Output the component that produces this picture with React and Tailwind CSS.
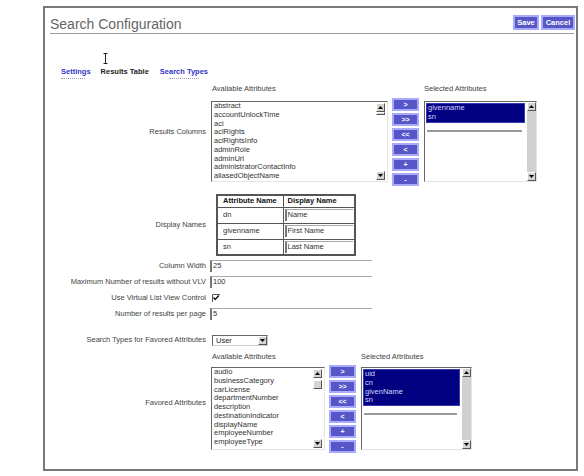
import React from 'react'

const resultsAvail = ['abstract', 'accountUnlockTime', 'aci', 'aclRights', 'aclRightsInfo', 'adminRole', 'adminUrl', 'administratorContactInfo', 'aliasedObjectName']
const favoredAvail = ['audio', 'businessCategory', 'carLicense', 'departmentNumber', 'description', 'destinationIndicator', 'displayName', 'employeeNumber', 'employeeType']
const moveButtons = ['>', '>>', '<<', '<', '+', '-']

function Arrow({ down }) {
  return (
    <div className="w-[9px] h-[9px] bg-[#d6d3ce] border border-t-white border-l-white border-b-[#555] border-r-[#555] flex items-center justify-center">
      <svg width="5" height="3" viewBox="0 0 5 3">
        <path d={down ? 'M0 0H5L2.5 3Z' : 'M0 3H5L2.5 0Z'} fill="#000" />
      </svg>
    </div>
  )
}

function AvailList({ items, w, h, thumb }) {
  return (
    <div className={`flex bg-white border border-t-[#666] border-l-[#666] border-r-[#e5e5e5] border-b-[#e5e5e5] ${w} ${h}`}>
      <div className="flex-1 pl-[2px] text-[7.5px] leading-[8.75px] text-[#333] overflow-hidden whitespace-nowrap">
        {items.map((t) => (
          <div key={t}>{t}</div>
        ))}
      </div>
      <div className="w-[11px] flex flex-col justify-between py-px pr-px">
        <div className="flex flex-col">
          <Arrow />
          <div className={`w-[9px] bg-[#d6d3ce] border border-t-white border-l-white border-b-[#555] border-r-[#555] ${thumb}`} />
        </div>
        <Arrow down />
      </div>
    </div>
  )
}

function SelectedList({ items, w, h }) {
  return (
    <div className={`flex bg-white border border-t-[#666] border-l-[#666] border-r-[#e5e5e5] border-b-[#e5e5e5] ${w} ${h}`}>
      <div className="flex-1 p-px">
        <div className="bg-[#000080] border border-[#3a3ab0] text-[#d4d4ff] text-[7.5px] leading-[8.75px] pl-px">
          {items.map((t) => (
            <div key={t}>{t}</div>
          ))}
        </div>
        <div className="mt-[7px] h-[2px] bg-[#9a9a9a] mx-px mr-[3px]" />
      </div>
      <div className="w-[10px] bg-[#d0d0d0] border-l border-white flex flex-col justify-between">
        <Arrow />
        <Arrow down />
      </div>
    </div>
  )
}

function MoveButtons() {
  return (
    <div className="flex flex-col gap-[2px]">
      {moveButtons.map((b) => (
        <div key={b} className="w-[27px] h-[13px] bg-[#5656c8] border-2 border-[#aaaafc] text-white text-[7px] font-bold leading-none flex items-center justify-center">
          {b}
        </div>
      ))}
    </div>
  )
}

function Field({ value, w }) {
  return (
    <div className={`h-[12px] bg-white border-t border-l-2 border-t-[#aaa] border-l-[#777] text-[7.5px] leading-[10px] pl-px text-[#333] ${w}`}>
      {value}
    </div>
  )
}

function Label({ children, cls = '' }) {
  return <div className={`w-[161px] text-right text-[7.5px] leading-[10px] text-[#444] whitespace-nowrap ${cls}`}>{children}</div>
}

export default function App() {
  return (
    <div className="relative w-[584px] h-[476px] bg-white font-['Liberation_Sans',Arial,sans-serif] overflow-hidden">
      {/* mouse text cursor */}
      <svg className="absolute left-[103px] top-[53px]" width="5" height="11" viewBox="0 0 5 11">
        <path d="M0.5 0.5H4.5M2.5 0.5V10.5M0.5 10.5H4.5" stroke="#222" strokeWidth="1" fill="none" />
      </svg>

      <div className="ml-[43px] mt-[6px] w-[535px] h-[465px] border-2 border-[#787878]">
        {/* header */}
        <div className="h-[25px] flex justify-between items-end pl-[5px] pr-[1px]">
          <div className="text-[14px] leading-[16px] text-[#666] mb-px">Search Configuration</div>
          <div className="flex gap-[2px] mb-[3px]">
            <div className="w-[26px] h-[15px] bg-[#5656c8] border-2 border-[#aaaafc] text-white text-[7.5px] font-bold flex items-center justify-center leading-none">Save</div>
            <div className="w-[34px] h-[15px] bg-[#5656c8] border-2 border-[#aaaafc] text-white text-[7.5px] font-bold flex items-center justify-center leading-none">Cancel</div>
          </div>
        </div>
        <div className="h-px bg-[#9a9a9a] ml-[5px] mr-[2px]" />

        {/* tabs */}
        <div className="mt-[33px] h-[10px] flex gap-[10px] pl-[16px] text-[7.5px] leading-[10px] font-bold">
          <span className="relative text-[#3232c8]">
            Settings
            <span className="absolute left-0 top-[11px] w-[24px] border-t border-dotted border-[#9a9aaa]" />
          </span>
          <span className="text-[#222]">Results Table</span>
          <span className="relative text-[#3232c8] ml-px">
            Search Types
            <span className="absolute left-[9px] top-[11px] w-[30px] border-t border-dotted border-[#9a9aaa]" />
          </span>
        </div>

        {/* results columns */}
        <div className="mt-[7px] flex gap-[4px] items-start">
          <Label cls="mt-[43px]">Results Columns</Label>
          <div className="flex items-start">
            <div className="ml-px">
              <div className="h-[10px] text-[7.5px] leading-[10px] text-[#444] pl-px">Available Attributes</div>
              <div className="mt-[7px]">
                <AvailList items={resultsAvail} w="w-[177px]" h="h-[81px]" thumb="h-[3px]" />
              </div>
            </div>
            <div className="ml-[4px] pt-[14px]">
              <MoveButtons />
            </div>
            <div className="ml-[5px]">
              <div className="h-[10px] text-[7.5px] leading-[10px] text-[#444]">Selected Attributes</div>
              <div className="mt-[7px]">
                <SelectedList items={['givenname', 'sn']} w="w-[113px]" h="h-[81px]" />
              </div>
            </div>
          </div>
        </div>

        {/* display names */}
        <div className="mt-[8px] flex gap-[4px] items-center">
          <Label>Display Names</Label>
          <table className="ml-[6px] border-collapse border-2 border-[#555] text-[7.5px] text-[#333]">
            <thead>
              <tr className="h-[12px]">
                <th className="w-[66px] border border-[#555] text-left font-bold pl-[5px] leading-[10px] text-[#111]">Attribute Name</th>
                <th className="w-[72px] border border-[#555] text-left font-bold pl-[4px] leading-[10px] text-[#111]">Display Name</th>
              </tr>
            </thead>
            <tbody>
              {[['dn', 'Name'], ['givenname', 'First Name'], ['sn', 'Last Name']].map(([a, d]) => (
                <tr key={a} className="h-[16px]">
                  <td className="border border-[#555] pl-[5px] leading-[10px]">{a}</td>
                  <td className="border border-[#555] px-px">
                    <Field value={d} w="w-[68px]" />
                  </td>
                </tr>
              ))}
            </tbody>
          </table>
        </div>

        {/* settings rows */}
        <div className="mt-[2px]">
          <div className="h-[16px] flex gap-[4px] items-center">
            <Label>Column Width</Label>
            <Field value="25" w="w-[162px]" />
          </div>
          <div className="h-[16px] flex gap-[4px] items-center">
            <Label>Maximum Number of results without VLV</Label>
            <Field value="100" w="w-[162px]" />
          </div>
          <div className="h-[16px] flex gap-[4px] items-center">
            <Label>Use Virtual List View Control</Label>
            <svg className="ml-[2px]" width="8" height="8" viewBox="0 0 8 8">
              <rect x="0" y="0" width="8" height="8" fill="#fff" />
              <path d="M0.5 8V0.5H8" stroke="#555" strokeWidth="1" fill="none" />
              <path d="M1.5 3.5L3.2 5.5L6.8 1.5" stroke="#111" strokeWidth="1.4" fill="none" />
            </svg>
          </div>
          <div className="h-[16px] flex gap-[4px] items-center">
            <Label>Number of results per page</Label>
            <Field value="5" w="w-[162px]" />
          </div>
        </div>

        <div className="mt-[10px] h-[16px] flex gap-[4px] items-center">
          <Label>Search Types for Favored Attributes</Label>
          <div className="ml-[2px] w-[56px] h-[11px] bg-white border border-t-[#666] border-l-[#666] border-r-[#ccc] border-b-[#ccc] flex items-center justify-between">
            <span className="pl-[3px] text-[7.5px] leading-[9px] text-[#222]">User</span>
            <Arrow down />
          </div>
        </div>

        {/* favored attributes */}
        <div className="mt-[4px] flex gap-[4px] items-center">
          <Label>Favored Attributes</Label>
          <div className="flex items-start">
            <div className="ml-px">
              <div className="h-[10px] text-[7.5px] leading-[10px] text-[#444] pl-px">Available Attributes</div>
              <div className="mt-[5px]">
                <AvailList items={favoredAvail} w="w-[114px]" h="h-[83px]" thumb="h-[9px] mt-[2px]" />
              </div>
            </div>
            <div className="ml-[4px] pt-[13px]">
              <MoveButtons />
            </div>
            <div className="ml-[5px]">
              <div className="h-[10px] text-[7.5px] leading-[10px] text-[#444]">Selected Attributes</div>
              <div className="mt-[5px]">
                <SelectedList items={['uid', 'cn', 'givenName', 'sn']} w="w-[111px]" h="h-[83px]" />
              </div>
            </div>
          </div>
        </div>
      </div>
    </div>
  )
}
